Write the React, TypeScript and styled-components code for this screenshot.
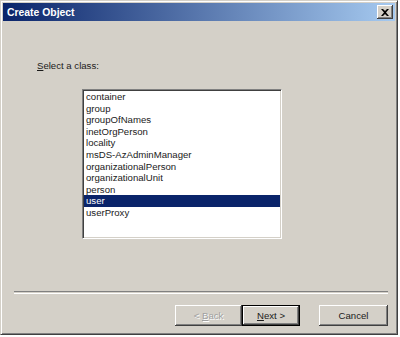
import React, { useState } from "react";
import styled, { createGlobalStyle } from "styled-components";

const GlobalStyle = createGlobalStyle`
    html, body {
        margin: 0;
        padding: 0;
        background: #ffffff;
    }
    body {
        font-family: "Liberation Sans", Arial, sans-serif;
        font-size: 9.6px;
    }
`;

const StyledWindow = styled.div`
    width: 398px;
    height: 335px;
    box-sizing: border-box;
    background: #d4d0c8;
    border-top: 1px solid #d4d0c8;
    border-left: 1px solid #d4d0c8;
    border-right: 1px solid #404040;
    border-bottom: 1px solid #404040;
    box-shadow: inset 1px 1px 0 #ffffff, inset -1px -1px 0 #808080;
    padding: 2px;
    display: flex;
    flex-direction: column;
`;

const StyledTitleBar = styled.div`
    height: 18px;
    display: flex;
    align-items: center;
    justify-content: space-between;
    padding: 0 2px 0 4px;
    background: linear-gradient(to right, #0a246a, #a6caf0);
    color: #ffffff;
    font-family: "Liberation Sans", Arial, sans-serif;
    font-weight: bold;
    font-size: 10.4px;
`;

const StyledCloseButton = styled.button`
    width: 16px;
    height: 14px;
    padding: 0;
    background: #d4d0c8;
    border: none;
    box-shadow: inset -1px -1px 0 #404040, inset 1px 1px 0 #ffffff, inset -2px -2px 0 #808080;
    display: flex;
    align-items: center;
    justify-content: center;
`;

const StyledBody = styled.div`
    flex: 1;
    display: flex;
    flex-direction: column;
    color: #1a1a1a;
`;

const StyledLabel = styled.div`
    margin: 38px 0 0 34px;
    line-height: 13px;
`;

const StyledListBox = styled.ul`
    list-style: none;
    margin: 17px 0 0 79px;
    padding: 1px 0 0;
    width: 200px;
    height: 150px;
    box-sizing: border-box;
    background: #ffffff;
    border-top: 1px solid #808080;
    border-left: 1px solid #808080;
    border-right: 1px solid #ffffff;
    border-bottom: 1px solid #ffffff;
    box-shadow: inset 1px 1px 0 #404040, inset -1px -1px 0 #d4d0c8;
    overflow: hidden;
`;

const StyledItem = styled.li<{ $selected: boolean }>`
    height: 11.6px;
    line-height: 11.6px;
    padding-left: 2px;
    margin: 0 1px 0 1px;
    white-space: nowrap;
    color: ${(props) => (props.$selected ? "#ffffff" : "#1a1a1a")};
    background: ${(props) => (props.$selected ? "#0a246a" : "transparent")};
`;

const StyledSeparator = styled.div`
    margin: 52px 7px 0 11px;
    height: 1px;
    border-top: 1px solid #808080;
    border-bottom: 1px solid #ffffff;
`;

const StyledButtonRow = styled.div`
    display: flex;
    margin: 11px 0 0 172px;
`;

const StyledButton = styled.button<{ $default?: boolean; $width: number }>`
    width: ${(props) => props.$width}px;
    height: 21px;
    padding: 0;
    font-family: "Liberation Sans", Arial, sans-serif;
    font-size: 9.6px;
    color: #1a1a1a;
    background: #d4d0c8;
    border: ${(props) => (props.$default ? "1px solid #000000" : "none")};
    box-shadow: inset -1px -1px 0 #404040, inset 1px 1px 0 #ffffff, inset -2px -2px 0 #808080;
    &:disabled {
        color: #a0a0a0;
        text-shadow: 1px 1px 0 #ffffff;
    }
`;

const StyledGap = styled.div<{ $width: number }>`
    width: ${(props) => props.$width}px;
`;

const classes = [
    "container",
    "group",
    "groupOfNames",
    "inetOrgPerson",
    "locality",
    "msDS-AzAdminManager",
    "organizationalPerson",
    "organizationalUnit",
    "person",
    "user",
    "userProxy",
];

export default function App() {
    const [selected, setSelected] = useState("user");

    return (
        <>
            <GlobalStyle />
            <StyledWindow>
                <StyledTitleBar>
                    <span>Create Object</span>
                    <StyledCloseButton>
                        <svg width="8" height="7" viewBox="0 0 8 7">
                            <path d="M0 0h2l2 2 2-2h2L5 3.5 8 7H6L4 5 2 7H0l3-3.5z" fill="#000" />
                        </svg>
                    </StyledCloseButton>
                </StyledTitleBar>
                <StyledBody>
                    <StyledLabel>
                        <u>S</u>elect a class:
                    </StyledLabel>
                    <StyledListBox>
                        {classes.map((name) => (
                            <StyledItem
                                key={name}
                                $selected={name === selected}
                                onClick={() => setSelected(name)}
                            >
                                {name}
                            </StyledItem>
                        ))}
                    </StyledListBox>
                    <StyledSeparator />
                    <StyledButtonRow>
                        <StyledButton $width={67} disabled>
                            &lt; <u>B</u>ack
                        </StyledButton>
                        <StyledButton $width={58} $default>
                            <u>N</u>ext &gt;
                        </StyledButton>
                        <StyledGap $width={19} />
                        <StyledButton $width={69}>Cancel</StyledButton>
                    </StyledButtonRow>
                </StyledBody>
            </StyledWindow>
        </>
    );
}
